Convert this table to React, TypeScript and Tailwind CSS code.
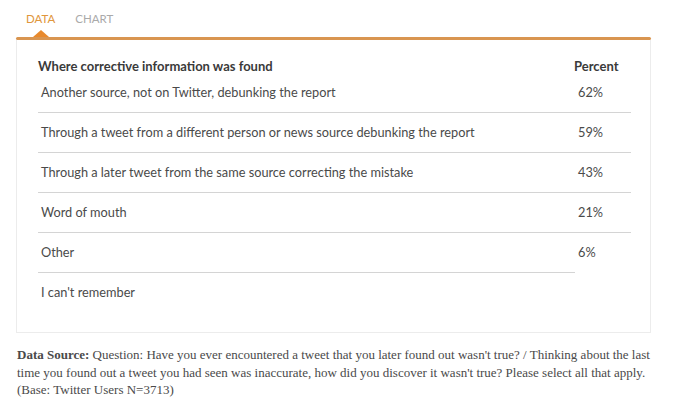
import React from 'react';

const rows = [
  { label: 'Another source, not on Twitter, debunking the report', pct: '62%' },
  { label: 'Through a tweet from a different person or news source debunking the report', pct: '59%' },
  { label: 'Through a later tweet from the same source correcting the mistake', pct: '43%' },
  { label: 'Word of mouth', pct: '21%' },
  { label: 'Other', pct: '6%' },
];

const App: React.FC = () => {
  return (
    <div className="w-[673px] h-[406px] bg-white font-['Lato',sans-serif]">
      <div className="pl-4 pr-[22px] pt-[12px]">
        {/* tabs */}
        <div className="flex gap-[20px] ml-[10px] h-[25px]">
          <div className="relative h-[25px] text-[11.5px] text-[#e0963c] leading-[14px]">
            DATA
            <span className="absolute left-1/2 -translate-x-1/2 bottom-0 w-0 h-0 border-l-[8px] border-r-[8px] border-b-[7px] border-l-transparent border-r-transparent border-b-[#e8892c]" />
          </div>
          <div className="text-[11.5px] text-[#aaaaaa] leading-[14px]">CHART</div>
        </div>
        <div className="h-[3px] bg-[#d99550] rounded-full" />

        {/* panel */}
        <div className="border border-t-0 border-[#ececec] h-[293px] pl-[21px] pr-[19px] pt-[18px]">
          <div className="flex justify-between text-[13px] font-bold text-[#3a3a3a] h-[15px] leading-[17px]">
            <span>Where corrective information was found</span>
            <span className="w-[57px]">Percent</span>
          </div>
          {rows.map((r, i) => (
            <div key={i} className="flex text-[12.75px] text-[#4a4a4a]">
              <div className="flex-1 border-b border-[#d4d4d4] h-[40px] flex items-center pl-[3px]">
                {r.label}
              </div>
              <div
                className={`w-[56px] h-[40px] flex items-center pl-[3px] ${
                  i < 4 ? 'border-b border-[#d4d4d4]' : ''
                }`}
              >
                {r.pct}
              </div>
            </div>
          ))}
          <div className="flex text-[12.75px] text-[#4a4a4a] h-[40px] items-center pl-[3px]">I can't remember</div>
        </div>

        {/* source */}
        <div className="mt-[13px] pl-[1px] -mr-[6px] text-[13px] leading-[17.5px] text-[#4a4a4a] font-['Liberation_Serif',serif]">
          <b>Data Source: </b>Question: Have you ever encountered a tweet that you later found out wasn't true? /
          Thinking about the last time you found out a tweet you had seen was inaccurate, how did you discover it
          wasn't true? Please select all that apply. (Base: Twitter Users N=3713)
        </div>
      </div>
    </div>
  );
};

export default App;
